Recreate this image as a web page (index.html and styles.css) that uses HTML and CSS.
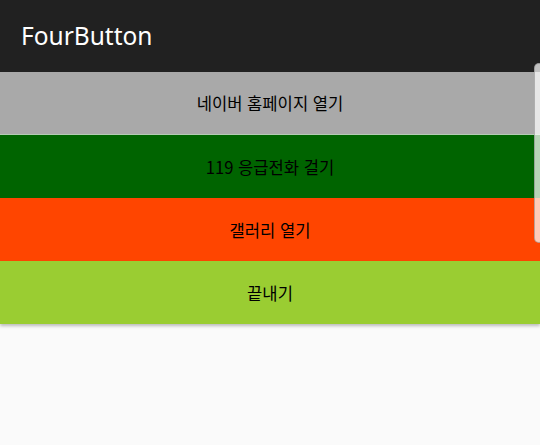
FILE: index.html
```html
<!DOCTYPE html>
<html lang="ko">
<head>
<meta charset="utf-8">
<link rel="stylesheet" href="styles.css">
</head>
<body>
<header class="appbar"><h1 class="title">FourButton</h1></header>
<main class="buttons">
  <button class="btn btn-gray">네이버 홈페이지 열기</button>
  <button class="btn btn-green">119 응급전화 걸기</button>
  <button class="btn btn-orange">갤러리 열기</button>
  <button class="btn btn-lime">끝내기</button>
</main>
<div class="edge-handle"></div>
</body>
</html>
```
FILE: styles.css
```css
html, body {
  margin: 0;
  padding: 0;
  background: #fafafa;
  width: 540px;
  height: 445px;
  overflow: hidden;
  font-family: "Noto Sans", "Noto Sans CJK KR", sans-serif;
}
.appbar {
  height: 72px;
  background: #212121;
  display: flex;
  align-items: center;
  padding-left: 21px;
  box-sizing: border-box;
}
.title {
  margin: 0;
  color: #ffffff;
  font-size: 24.5px;
  font-weight: 400;
  font-family: "Noto Sans", sans-serif;
  position: relative;
  top: -1px;
}
.buttons {
  display: flex;
  flex-direction: column;
}
.btn {
  height: 63px;
  border: none;
  margin: 0;
  padding: 0;
  width: 100%;
  font-family: "Noto Sans CJK KR", "Noto Sans", sans-serif;
  font-size: 16.6px;
  color: #000;
  display: flex;
  align-items: center;
  justify-content: center;
}
.btn-gray { background: #a9a9a9; border-bottom: 1px solid #b5ccb5; box-sizing: border-box; }
.btn-green { background: #006400; }
.btn-orange { background: #ff4500; }
.btn-lime { background: #9acd32; box-shadow: 0 2px 3px rgba(0,0,0,0.25); }
.edge-handle {
  position: absolute;
  left: 534px;
  top: 63px;
  width: 10px;
  height: 180px;
  box-sizing: border-box;
  border-radius: 6px;
  background: rgba(255,255,255,0.72);
  border: 1px solid rgba(120,120,120,0.5);
}
```
